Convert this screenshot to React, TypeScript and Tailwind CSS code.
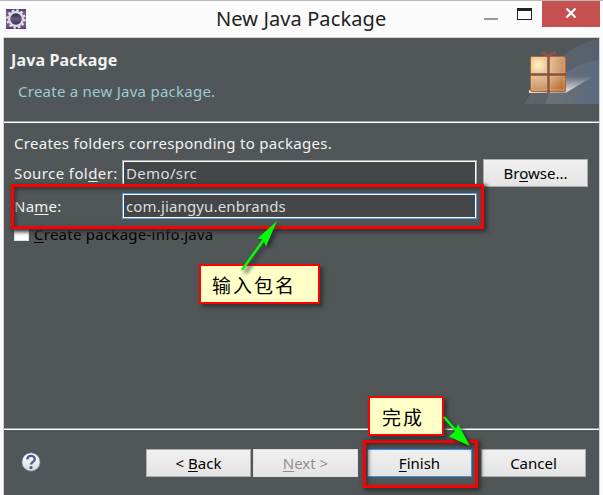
import type { ReactNode } from "react";

function DialogButton({ children, className = "" }: { children: ReactNode; className?: string }) {
  return (
    <button
      className={`h-7 w-[105px] shrink-0 border bg-gradient-to-b from-[#f0f0f0] to-[#e4e4e4] text-center text-[15px] leading-[26px] tracking-normal ${className}`}
    >
      {children}
    </button>
  );
}

function Separator() {
  return <div className="h-[2px] shrink-0 border-t border-[#a0a0a0] bg-white" />;
}

function AppIcon() {
  return (
    <svg className="mt-[8px] ml-1.5 h-5 w-5" viewBox="0 0 20 20">
      <defs>
        <linearGradient id="core" x2="0" y2="1">
          <stop offset="0" stopColor="#272536" />
          <stop offset=".5" stopColor="#66578a" />
          <stop offset="1" stopColor="#302d45" />
        </linearGradient>
      </defs>
      <path fill="#76559b" d="M0 0h20v20H0z" />
      <path fill="#5b4382" d="M0 0h20v2H0zM0 18h20v2H0z" />
      <circle cx="10" cy="10" r="8.5" fill="none" stroke="#e4e2df" strokeWidth="2.4" strokeDasharray="2.45 2" />
      <circle cx="10" cy="10" r="6.9" fill="url(#core)" stroke="#dddbd8" strokeWidth="2.3" />
    </svg>
  );
}

function PackageBanner() {
  return (
    <svg className="h-[66px] w-[75px]" viewBox="0 0 75 66">
      <defs>
        <linearGradient id="sweep">
          <stop offset="0" stopColor="#6c7274" />
          <stop offset="1" stopColor="#5c6980" />
        </linearGradient>
        <linearGradient id="shine" x1="0" x2="1">
          <stop offset="0" stopColor="#e9e2e9" />
          <stop offset="1" stopColor="#b6b7c7" stopOpacity=".6" />
        </linearGradient>
        <linearGradient id="fade" x2="0" y2="1">
          <stop offset="0" stopColor="#d5cfda" stopOpacity="0" />
          <stop offset="1" stopColor="#eee6ec" />
        </linearGradient>
        <radialGradient id="box" cx="22%" cy="24%" r="95%">
          <stop offset="0" stopColor="#fff4bd" />
          <stop offset=".3" stopColor="#e8c59a" />
          <stop offset=".65" stopColor="#d1a176" />
          <stop offset="1" stopColor="#b96f30" />
        </radialGradient>
      </defs>
      <path d="M0 66C15 44 35 8 75 1V66Z" fill="url(#sweep)" opacity=".5" />
      <path d="M21 66C29 40 49 25 75 22V66Z" fill="url(#sweep)" />
      <path d="M42 38H70L43 54H6V51H42Z" fill="url(#fade)" />
      <path d="M5 52h38v3H5z" fill="url(#shine)" />
      <rect x="6.5" y="18.500" width="35" height="35" rx="1.5" fill="url(#box)" stroke="#a9683f" />
      <path d="M8 20h15v15H8zM26 20h14v15H26zM8 38h15v14H8zM26 38h14v14H26z" fill="none" stroke="#f1c18d" strokeWidth=".7" opacity=".7" />
      <path d="M24.500 17v38M6 36.500h36" stroke="#85533f" strokeWidth="2.4" />
      <path d="M24.500 18c-2-4-7-5-7-3 1 2 4 2 7 3 3-1 6-1 7-3 0-2-5-1-7 3" fill="none" stroke="#8f5543" strokeWidth="1.5" />
    </svg>
  );
}

export default function App() {
  return (
    <div className="relative flex h-[495px] w-[603px] flex-col overflow-hidden border-t border-[#b9b9b9] bg-[#fbfbfb] font-['Noto_Sans','Noto_Sans_CJK_SC',sans-serif] text-[15px] leading-5 tracking-[0.25px] text-[#f2f2f2]">
      <header className="flex h-9 shrink-0 text-[#222]">
        <AppIcon />
        <h1 className="ml-[190px] w-[260px] pt-[4px] text-[20px] leading-7 tracking-[0.1px] whitespace-nowrap">New Java Package</h1>
        <div className="mt-[17px] ml-2 h-[2px] w-3.5 bg-[#999]" />
        <div className="mt-[7px] ml-[19px] h-3 w-[15px] border border-t-[3px] border-[#222]" />
        <div className="ml-[10px] flex h-[26px] w-[58px] justify-center bg-[#c75050]">
          <svg className="mt-[7px] h-[10px] w-3" viewBox="0 0 12 10"><path d="m1.5 .5 9 9m0-9-9 9" stroke="white" strokeWidth="2.2" /></svg>
        </div>
      </header>

      <div className="mr-[3px] ml-[3px] flex min-h-0 flex-1 flex-col border-x border-t border-[#d0d2d2] bg-[#515658]">
        <section className="flex h-[83px] shrink-0 justify-between">
          <div className="pt-3 pl-[7px]">
            <h2 className="text-[16px] font-bold tracking-[0.15px] whitespace-nowrap">Java Package</h2>
            <p className="mt-[11px] pl-[7px] whitespace-nowrap text-[#9bcbd1]">Create a new Java package.</p>
          </div>
          <PackageBanner />
        </section>
        <Separator />
        <main className="flex h-[305px] shrink-0 flex-col pt-[10px] pl-[10px]">
          <p className="tracking-[0.29px] whitespace-nowrap">Creates folders corresponding to packages.</p>
          <div className="mt-[6px] flex h-7">
            <label className="w-[108px] pt-[4px] tracking-[0.4px] whitespace-nowrap">Source fol<u className="underline-offset-2">d</u>er:</label>
            <div className="mt-px h-[27px] w-[355px] border border-[#aaa] bg-[#43474a]">
              <div className="h-full border border-white pl-[2px] leading-[23px] tracking-[0.35px] text-[#ddd]">Demo/src</div>
            </div>
            <DialogButton className="ml-[6px] border-[#adadad] text-black">Br<u className="underline-offset-2">o</u>wse...</DialogButton>
          </div>
          <div className="mt-[6px] flex h-[26px]">
            <label className="w-[108px] pt-[3px]">Na<u className="underline-offset-2">m</u>e:</label>
            <div className="w-[355px] border border-[#569de5] bg-[#43474a]">
              <div className="h-full border border-white pl-[2px] leading-[22px] tracking-[0.15px] text-[#ddd]">com.jiangyu.enbrands</div>
            </div>
          </div>
          <div className="mt-[5px] flex text-black">
            <div className="mt-[2px] h-[15px] w-[15px] border border-[#e0e0e0] bg-white" />
            <span className="ml-[5px] whitespace-nowrap"><u className="underline-offset-2">C</u>reate package-info.java</span>
          </div>
        </main>
        <Separator />
        <footer className="flex flex-1 pt-[19px] pl-[17px]">
          <svg className="mt-[3px] h-5 w-5" viewBox="0 0 20 20">
            <defs><linearGradient id="help" x2="0" y2="1"><stop stopColor="#fff" /><stop offset="1" stopColor="#d8dbe1" /></linearGradient></defs>
            <circle cx="10" cy="10" r="9.2" fill="url(#help)" stroke="#66718a" strokeWidth=".8" />
            <path d="M6.300 7.400C6.500 2.700 13.800 2.700 13.800 7.200c0 3-3.800 2.600-3.800 5.400" fill="none" stroke="#4f5d83" strokeWidth="2.4" />
            <circle cx="10" cy="15.600" r="1.6" fill="#4f5d83" />
          </svg>
          <DialogButton className="ml-[105px] border-[#adadad] text-black">&lt; <u className="underline-offset-2">B</u>ack</DialogButton>
          <DialogButton className="ml-[2px] border-[#dedede] text-[#909090]"><u className="underline-offset-2">N</u>ext &gt;</DialogButton>
          <DialogButton className="ml-[9px] border-[#3b91ec] text-black"><u className="underline-offset-2">F</u>inish</DialogButton>
          <DialogButton className="ml-[9px] border-[#adadad] text-black">Cancel</DialogButton>
        </footer>
      </div>

      <div className="absolute top-[183px] left-[11px] h-[45px] w-[473px] border-[3px] border-[#f00] shadow-[2px_2px_4px_1px_#303436,inset_2px_2px_4px_#303436]" />
      <div className="absolute top-[263px] left-[199px] h-10 w-[121px] border-2 border-[#f00] bg-[#ffffc8] pt-[5px] pl-[11px] font-['Noto_Sans_CJK_SC',sans-serif] text-[19px] leading-7 tracking-[2px] whitespace-nowrap text-black shadow-[3px_3px_4px_#303436]">输入包名</div>
      <div className="absolute top-[439px] left-[363px] h-12 w-[115px] border-[3px] border-[#f00] shadow-[2px_2px_4px_1px_#303436,inset_2px_2px_4px_#303436]" />
      <div className="absolute top-[395px] left-[368px] h-10 w-[76px] border-2 border-[#f00] bg-[#ffffc8] pt-[5px] pl-[12px] font-['Noto_Sans_CJK_SC',sans-serif] text-[19px] leading-7 tracking-[2px] whitespace-nowrap text-black shadow-[3px_3px_4px_#303436]">完成</div>
      <svg className="pointer-events-none absolute -top-px left-0 h-[495px] w-[603px] drop-shadow-[3px_3px_2px_#292d2f]" viewBox="0 0 603 495">
        <path d="M242 270 265 238M444 417 458 433" fill="none" stroke="#0f0" strokeWidth="2.5" />
        <path d="M277 221 257.500 238.500 263 239.500 266 246.500Z" fill="#0f0" />
        <path d="M470 446 449 436.500 455 431.500 458 424Z" fill="#0f0" />
      </svg>
    </div>
  );
}
